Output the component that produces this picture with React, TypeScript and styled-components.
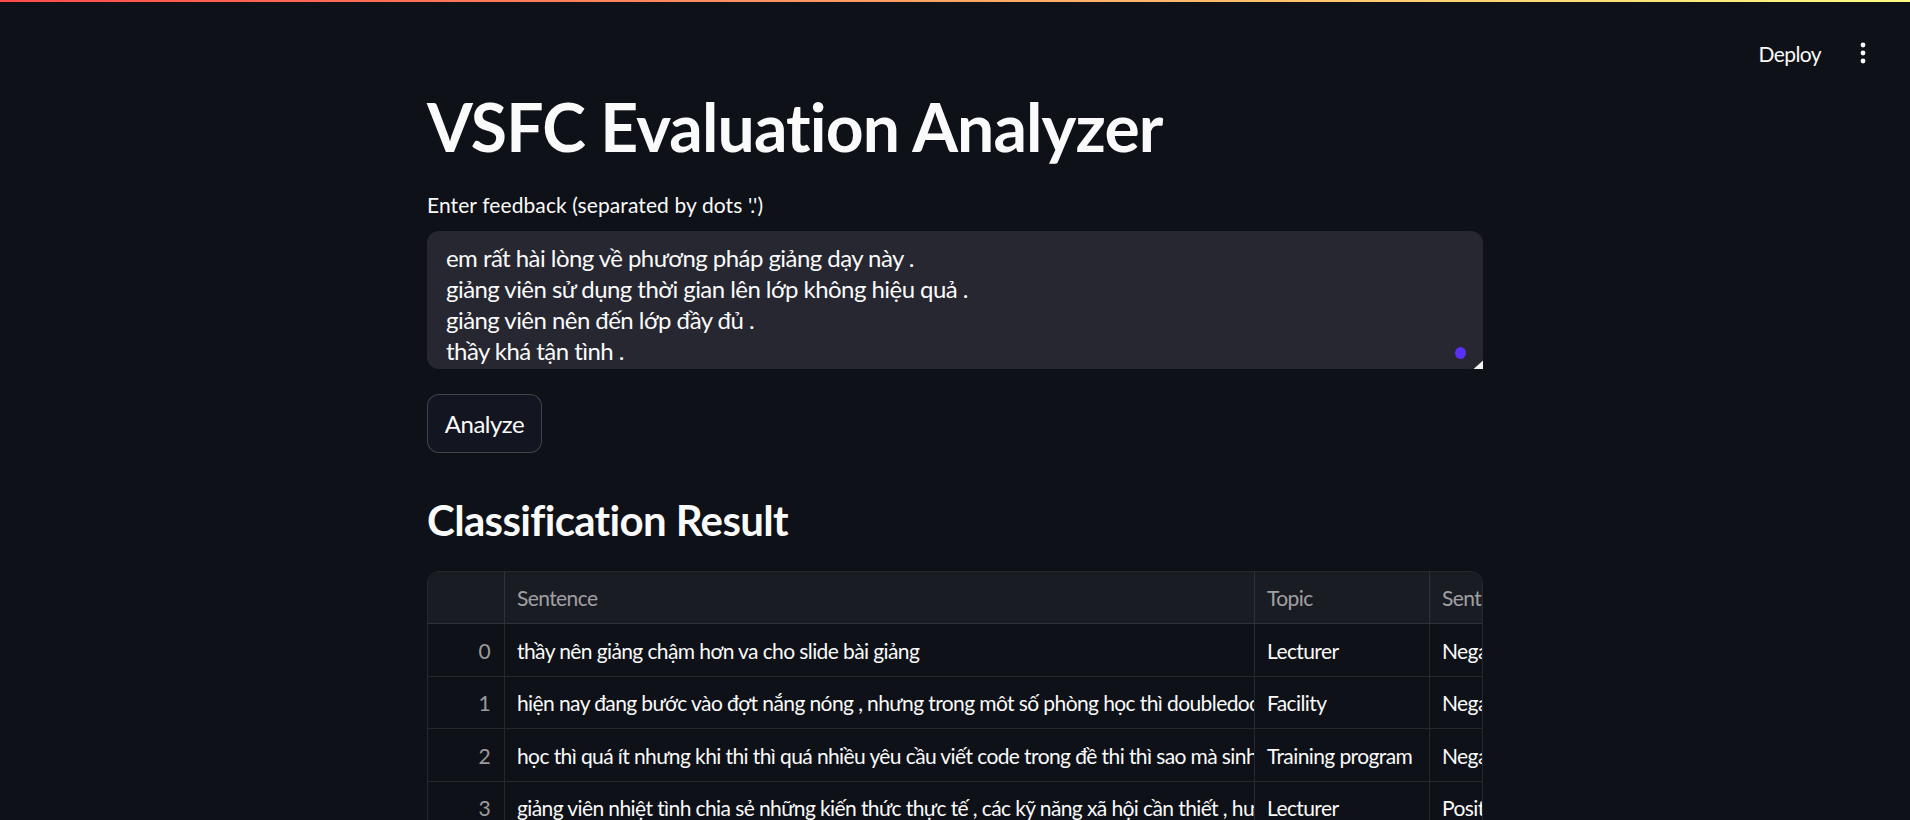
import React from "react";
import styled, { createGlobalStyle } from "styled-components";

const GlobalStyle = createGlobalStyle`
  html, body {
    margin: 0;
    padding: 0;
    height: 100%;
    overflow: hidden;
    background: #0e1117;
  }
  body {
    font-family: "Lato", "Noto Sans", sans-serif;
    color: #fafafa;
  }
  * { box-sizing: border-box; }
`;

const Page = styled.div`
  width: 1910px;
  height: 820px;
  overflow: hidden;
  background: #0e1117;
  display: flex;
  flex-direction: column;
`;

const Decoration = styled.div`
  height: 2px;
  flex: none;
  background: linear-gradient(90deg, rgb(255, 75, 75), rgb(255, 253, 128));
`;

const Header = styled.header`
  height: 85px;
  flex: none;
  display: flex;
  justify-content: flex-end;
  align-items: flex-start;
  padding: 31px 29px 0 0;
  gap: 12px;
`;

const DeployButton = styled.button`
  height: 40px;
  padding: 0 12px;
  background: transparent;
  border: none;
  color: #fafafa;
  font-family: inherit;
  font-size: 21px;
  letter-spacing: -0.6px;
  cursor: pointer;
`;

const MenuButton = styled.button`
  width: 36px;
  height: 40px;
  padding: 0;
  background: transparent;
  border: none;
  display: flex;
  align-items: center;
  justify-content: center;
`;

const Main = styled.main`
  width: 1056px;
  margin: 0 auto;
  display: flex;
  flex-direction: column;
  align-items: flex-start;
`;

const Title = styled.h1`
  margin: 0;
  font-size: 66px;
  line-height: 1.2;
  font-weight: 700;
  letter-spacing: -0.85px;
`;

const Label = styled.label`
  margin-top: 26px;
  font-size: 21px;
  line-height: 1.2;
  letter-spacing: 0.1px;
`;

const TextAreaWrap = styled.div`
  position: relative;
  margin-top: 14px;
  width: 100%;
  height: 138px;
`;

const TextArea = styled.textarea`
  width: 100%;
  height: 100%;
  display: block;
  resize: none;
  border: none;
  outline: none;
  border-radius: 12px;
  background: #262730;
  color: #fafafa;
  font-family: inherit;
  font-size: 24px;
  line-height: 31px;
  letter-spacing: -0.55px;
  padding: 11px 19px 0;
  overflow: hidden;
`;

const AssistDot = styled.span`
  position: absolute;
  right: 17px;
  bottom: 10px;
  width: 11px;
  height: 12px;
  border-radius: 50%;
  background: #5a2ff7;
`;

const Grip = styled.span`
  position: absolute;
  right: 0;
  bottom: 0;
  width: 10px;
  height: 9px;
  background: #f2f2f2;
  clip-path: polygon(0 100%, 100% 0, 100% 100%);
`;

const Button = styled.button`
  margin-top: 25px;
  height: 59px;
  width: 115px;
  border-radius: 12px;
  border: 1px solid rgba(250, 250, 250, 0.2);
  background: #131620;
  color: #fafafa;
  font-family: inherit;
  font-size: 24px;
  letter-spacing: -0.5px;
  padding: 0;
`;

const SectionTitle = styled.h2`
  margin: 42px 0 0;
  font-size: 42px;
  line-height: 1.2;
  font-weight: 700;
  letter-spacing: -0.65px;
`;

const Table = styled.div`
  margin-top: 25px;
  width: 100%;
  border: 1px solid rgba(250, 250, 250, 0.1);
  border-radius: 12px;
  overflow: hidden;
`;

const Row = styled.div<{ $head?: boolean }>`
  display: grid;
  grid-template-columns: 77px 750px 175px 200px;
  height: 52.5px;
  background: ${(p) => (p.$head ? "#1a1c24" : "#0e1117")};
  border-bottom: 1px solid rgba(250, 250, 250, 0.1);
`;

const Cell = styled.div<{ $head?: boolean; $index?: boolean }>`
  display: flex;
  align-items: center;
  justify-content: ${(p) => (p.$index ? "flex-end" : "flex-start")};
  padding: 0 12px;
  padding-right: ${(p) => (p.$index ? "14px" : "0")};
  border-right: 1px solid rgba(250, 250, 250, 0.1);
  white-space: nowrap;
  overflow: hidden;
  font-size: 21px;
  letter-spacing: -0.6px;
  color: ${(p) => (p.$head || p.$index ? "rgba(250, 250, 250, 0.6)" : "#fafafa")};
`;

const rows = [
  {
    s: "thầy nên giảng chậm hơn va cho slide bài giảng",
    t: "Lecturer",
    v: "Negative",
  },
  {
    s: "hiện nay đang bước vào đợt nắng nóng , nhưng trong môt số phòng học thì doubledoor không hoạt động",
    t: "Facility",
    v: "Negative",
  },
  {
    s: "học thì quá ít nhưng khi thi thì quá nhiều yêu cầu viết code trong đề thi thì sao mà sinh viên làm kịp",
    t: "Training program",
    v: "Negative",
  },
  {
    s: "giảng viên nhiệt tình chia sẻ những kiến thức thực tế , các kỹ năng xã hội cần thiết , hướng dẫn tận tình",
    t: "Lecturer",
    v: "Positive",
  },
  {
    s: "thầy dạy dễ hiểu",
    t: "Lecturer",
    v: "Positive",
  },
];

const feedback = [
  "em rất hài lòng về phương pháp giảng dạy này .",
  "giảng viên sử dụng thời gian lên lớp không hiệu quả .",
  "giảng viên nên đến lớp đầy đủ .",
  "thầy khá tận tình .",
].join("\n");

export default function App() {
  return (
    <>
      <GlobalStyle />
      <Page>
        <Decoration />
        <Header>
          <DeployButton>Deploy</DeployButton>
          <MenuButton aria-label="menu">
            <svg width="6" height="22" viewBox="0 0 6 22">
              <circle cx="3" cy="3" r="2.4" fill="#fafafa" />
              <circle cx="3" cy="11" r="2.4" fill="#fafafa" />
              <circle cx="3" cy="19" r="2.4" fill="#fafafa" />
            </svg>
          </MenuButton>
        </Header>
        <Main>
          <Title>VSFC Evaluation Analyzer</Title>
          <Label htmlFor="fb">Enter feedback (separated by dots '.')</Label>
          <TextAreaWrap>
            <TextArea id="fb" readOnly defaultValue={feedback} />
            <AssistDot />
            <Grip />
          </TextAreaWrap>
          <Button>Analyze</Button>
          <SectionTitle>Classification Result</SectionTitle>
          <Table>
            <Row $head>
              <Cell $head $index />
              <Cell $head>Sentence</Cell>
              <Cell $head>Topic</Cell>
              <Cell $head>Sentiment</Cell>
            </Row>
            {rows.map((r, i) => (
              <Row key={i}>
                <Cell $index>{i}</Cell>
                <Cell>{r.s}</Cell>
                <Cell>{r.t}</Cell>
                <Cell>{r.v}</Cell>
              </Row>
            ))}
          </Table>
        </Main>
      </Page>
    </>
  );
}
